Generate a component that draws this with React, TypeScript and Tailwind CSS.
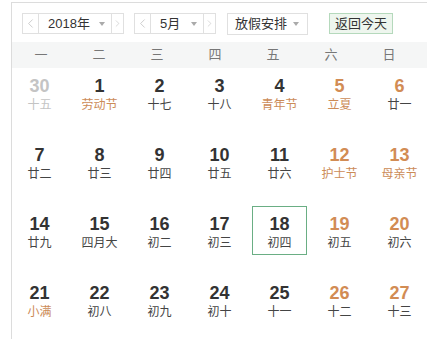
import { ChevronLeft, ChevronRight } from "lucide-react";

type Day = { d: number; l: string; other?: boolean; fest?: boolean; today?: boolean };

const weeks: Day[][] = [
  [
    { d: 30, l: "十五", other: true },
    { d: 1, l: "劳动节", fest: true },
    { d: 2, l: "十七" },
    { d: 3, l: "十八" },
    { d: 4, l: "青年节", fest: true },
    { d: 5, l: "立夏", fest: true },
    { d: 6, l: "廿一" },
  ],
  [
    { d: 7, l: "廿二" },
    { d: 8, l: "廿三" },
    { d: 9, l: "廿四" },
    { d: 10, l: "廿五" },
    { d: 11, l: "廿六" },
    { d: 12, l: "护士节", fest: true },
    { d: 13, l: "母亲节", fest: true },
  ],
  [
    { d: 14, l: "廿九" },
    { d: 15, l: "四月大" },
    { d: 16, l: "初二" },
    { d: 17, l: "初三" },
    { d: 18, l: "初四", today: true },
    { d: 19, l: "初五" },
    { d: 20, l: "初六" },
  ],
  [
    { d: 21, l: "小满", fest: true },
    { d: 22, l: "初八" },
    { d: 23, l: "初九" },
    { d: 24, l: "初十" },
    { d: 25, l: "十一" },
    { d: 26, l: "十二" },
    { d: 27, l: "十三" },
  ],
];

const weekdays = ["一", "二", "三", "四", "五", "六", "日"];

function Caret() {
  return <span className="inline-block w-0 h-0 border-x-[3px] border-x-transparent border-t-[4px] border-t-[#aaa]" />;
}

function Stepper({ label, width }: { label: string; width: string }) {
  return (
    <div className="flex h-[21px] border border-[#e0e0e0] text-[13px] text-[#333]">
      <div className="w-[16px] flex items-center justify-center border-r border-[#e0e0e0] text-[#b0b0b0]">
        <ChevronLeft size={17} strokeWidth={1} />
      </div>
      <div className={`${width} flex items-center justify-between pl-[9px] pr-[6px]`}>
        <span>{label}</span>
        <Caret />
      </div>
      <div className="w-[12px] flex items-center justify-center border-l border-[#e0e0e0] text-[#b0b0b0]">
        <ChevronRight size={17} strokeWidth={1} />
      </div>
    </div>
  );
}

export default function App() {
  return (
    <div className="w-[427px] h-[339px] bg-white overflow-hidden pt-[2px] pl-[11px] font-['Liberation_Sans','Noto_Sans_CJK_SC',sans-serif]">
      <div className="border-l border-t border-[#dcdcdc] h-full">
        <div className="h-[39px] flex items-start pt-[10px] pl-[10px]">
          <Stepper label="2018年" width="w-[72px]" />
          <div className="ml-[10px]">
            <Stepper label="5月" width="w-[52px]" />
          </div>
          <div className="ml-[11px] h-[22px] w-[81px] border border-[#e0e0e0] flex items-center justify-between pl-[7px] pr-[8px] text-[13px] text-[#333]">
            <span>放假安排</span>
            <Caret />
          </div>
          <div className="ml-[21px] h-[21px] px-[5px] bg-[#eef6ee] border border-[#b5d9bc] flex items-center text-[13px] text-[#333]">
            返回今天
          </div>
        </div>
        <div className="h-[26px] bg-[#f5f6f6] grid grid-cols-[repeat(7,58px)] items-center text-[13px] text-[#777]">
          {weekdays.map((w) => (
            <div key={w} className="text-center">{w}</div>
          ))}
        </div>
        <div className="flex flex-col gap-[20px]">
          {weeks.map((week, i) => (
            <div key={i} className="grid grid-cols-[repeat(7,55px)] gap-x-[5px]">
              {week.map((day, j) => {
                const weekend = j >= 5 && !day.other;
                const numColor = day.other ? "text-[#c4c4c4]" : weekend ? "text-[#d28c54]" : "text-[#333]";
                const lunColor = day.other ? "text-[#c4c4c4]" : day.fest ? "text-[#cc8b57]" : "text-[#444]";
                return (
                  <div
                    key={j}
                    className={`h-[49px] flex flex-col items-center pt-[8px] ${day.today ? "border border-[#6aae84]" : ""}`}
                  >
                    <div className={`text-[18px] leading-[21px] font-bold ${numColor} ${day.today ? "-mt-px" : ""}`}>{day.d}</div>
                    <div className={`text-[12px] leading-[16px] ${lunColor}`}>{day.l}</div>
                  </div>
                );
              })}
            </div>
          ))}
        </div>
      </div>
    </div>
  );
}
